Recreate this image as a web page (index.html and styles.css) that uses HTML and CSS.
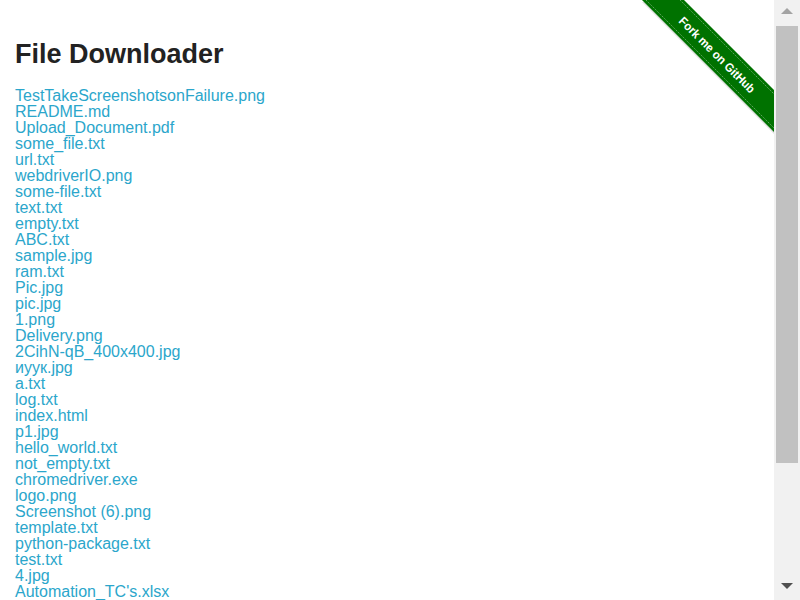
FILE: index.html
```html
<!DOCTYPE html>
<html>
<head>
<meta charset="utf-8">
<link rel="stylesheet" href="styles.css">
</head>
<body>
<div class="page">
  <a class="ribbon" href="#">
    <svg width="149" height="149" viewBox="0 0 149 149">
      <polygon points="17,2 59,2 149,92 149,134" fill="#000" opacity="0.12"/>
      <polygon points="17,0 59,0 149,90 149,132" fill="#007200"/>
      <line x1="21" y1="0" x2="149" y2="128" stroke="#5fa55f" stroke-width="1" stroke-dasharray="1.5,1"/>
      <line x1="55" y1="0" x2="149" y2="94" stroke="#5fa55f" stroke-width="1" stroke-dasharray="1.5,1"/>
      <text x="0" y="0" transform="translate(92,55) rotate(45)" text-anchor="middle" dominant-baseline="central" textLength="102" lengthAdjust="spacingAndGlyphs" class="ribbon-text">Fork me on GitHub</text>
    </svg>
  </a>
  <div class="content">
    <h3 class="title">File Downloader</h3>
    <div class="files">
      <a href="#">TestTakeScreenshotsonFailure.png</a>
      <a href="#">README.md</a>
      <a href="#">Upload_Document.pdf</a>
      <a href="#">some_file.txt</a>
      <a href="#">url.txt</a>
      <a href="#">webdriverIO.png</a>
      <a href="#">some-file.txt</a>
      <a href="#">text.txt</a>
      <a href="#">empty.txt</a>
      <a href="#">ABC.txt</a>
      <a href="#">sample.jpg</a>
      <a href="#">ram.txt</a>
      <a href="#">Pic.jpg</a>
      <a href="#">pic.jpg</a>
      <a href="#">1.png</a>
      <a href="#">Delivery.png</a>
      <a href="#">2CihN-qB_400x400.jpg</a>
      <a href="#">иуук.jpg</a>
      <a href="#">a.txt</a>
      <a href="#">log.txt</a>
      <a href="#">index.html</a>
      <a href="#">p1.jpg</a>
      <a href="#">hello_world.txt</a>
      <a href="#">not_empty.txt</a>
      <a href="#">chromedriver.exe</a>
      <a href="#">logo.png</a>
      <a href="#">Screenshot (6).png</a>
      <a href="#">template.txt</a>
      <a href="#">python-package.txt</a>
      <a href="#">test.txt</a>
      <a href="#">4.jpg</a>
      <a href="#">Automation_TC's.xlsx</a>
    </div>
  </div>
</div>
<div class="scrollbar">
  <div class="sb-btn"><span class="arrow-up"></span></div>
  <div class="sb-track"><div class="sb-thumb"></div></div>
  <div class="sb-btn sb-btn-down"><span class="arrow-down"></span></div>
</div>
</body>
</html>
```
FILE: styles.css
```css
html, body {
  margin: 0;
  padding: 0;
  background: #fff;
  font-family: "Liberation Sans", Arial, sans-serif;
  color: #222;
}
body {
  display: flex;
  height: 600px;
  overflow: hidden;
}
.page {
  flex: 1;
  position: relative;
  overflow: hidden;
}
.ribbon {
  position: absolute;
  top: 0;
  right: 0;
  width: 149px;
  height: 149px;
  display: block;
}
.ribbon svg { display: block; }
.ribbon-text {
  fill: #fff;
  font-family: "Liberation Sans", Arial, sans-serif;
  font-weight: bold;
  font-size: 12px;
}
.content {
  padding: 15px;
}
.title {
  margin: 23px 0 18px 0;
  font-size: 27px;
  line-height: 32px;
  font-weight: bold;
  color: #222;
}
.files {
  display: flex;
  flex-direction: column;
  align-items: flex-start;
}
.files a {
  color: #2ba6cb;
  text-decoration: none;
  font-size: 16px;
  line-height: 16px;
}
.scrollbar {
  width: 26px;
  flex: none;
  background: #f1f1f1;
  display: flex;
  flex-direction: column;
}
.sb-btn {
  height: 26px;
  flex: none;
  display: flex;
  justify-content: center;
  align-items: center;
}
.sb-btn-down {
  height: 26px;
}
.arrow-up {
  width: 0;
  height: 0;
  border-left: 6px solid transparent;
  border-right: 6px solid transparent;
  border-bottom: 6px solid #a3a3a3;
  margin-top: 2px;
  margin-bottom: 6px;
}
.arrow-down {
  width: 0;
  height: 0;
  border-left: 6px solid transparent;
  border-right: 6px solid transparent;
  border-top: 6px solid #505050;
  margin-top: 0;
  margin-bottom: 2px;
}
.sb-track {
  flex: 1;
  padding: 0 2px;
}
.sb-thumb {
  height: 437px;
  background: #c1c1c1;
}
```
